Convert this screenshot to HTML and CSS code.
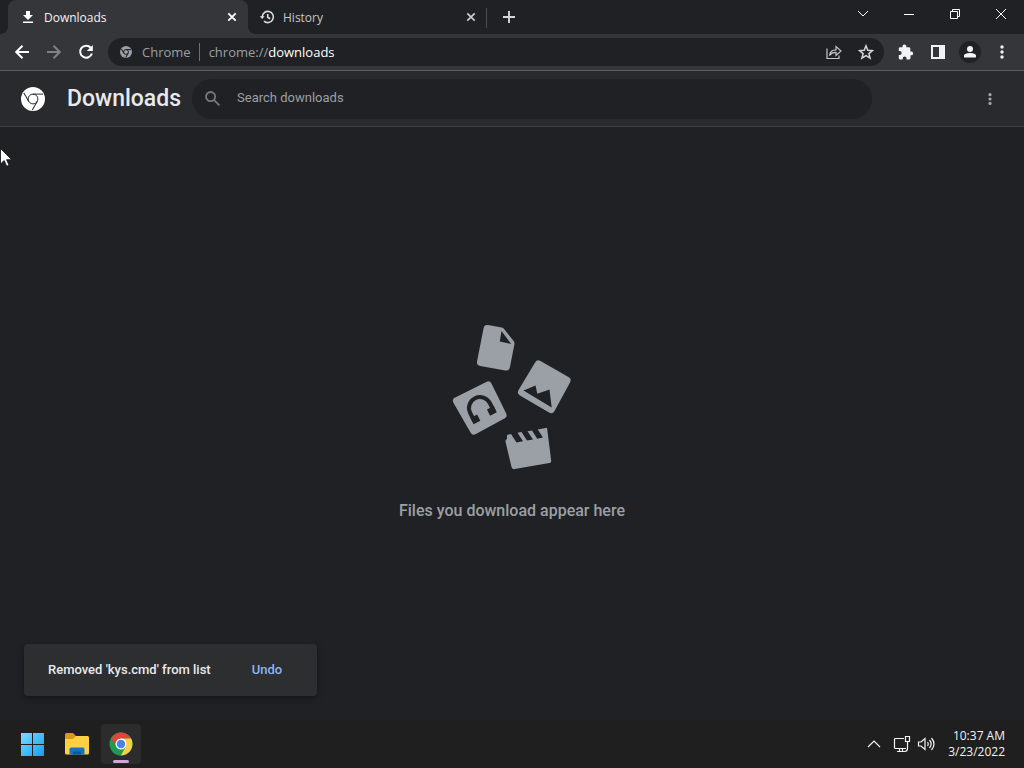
FILE: index.html
```html
<!DOCTYPE html>
<html lang="en">
<head>
<meta charset="utf-8">
<title>Downloads</title>
<link rel="stylesheet" href="styles.css">
</head>
<body>
<svg class="defs" aria-hidden="true">
  <symbol id="chrome-mono" viewBox="0 0 24 24">
    <circle cx="12" cy="12" r="12" fill="currentColor"/>
    <g class="spokes">
      <circle cx="12" cy="12" r="4.900"/>
      <path d="M12 7.100H22"/>
      <path d="M12 7.100H22" transform="rotate(120 12 12)"/>
      <path d="M12 7.100H22" transform="rotate(240 12 12)"/>
    </g>
  </symbol>
</svg>

<header class="tabstrip">
  <div class="tab tab-active">
    <svg class="tab-icon" viewBox="0 0 16 16"><path d="M6 2h4v4h3l-5 5-5-5h3zM3 12.500h10V14H3z" fill="#fff"/></svg>
    <span class="tab-title">Downloads</span>
    <button class="tab-close" aria-label="Close Downloads"><svg viewBox="0 0 16 16"><path d="M4.300 4.300l7.400 7.400M11.700 4.300l-7.400 7.400" stroke="#fff" stroke-width="1.800"/></svg></button>
  </div>
  <div class="tab tab-idle">
    <svg class="tab-icon" viewBox="0 0 16 16" fill="none" stroke="#dadce0" stroke-width="1.600"><path d="M3.200 8A5.600 5.600 0 1 1 5 12.100M8.700 5v3.300l2.500 1.500"/><path d="M.8 7.300h4.800L3.200 10z" fill="#dadce0" stroke="none"/></svg>
    <span class="tab-title">History</span>
    <button class="tab-close" aria-label="Close History"><svg viewBox="0 0 16 16"><path d="M4.300 4.300l7.400 7.400M11.700 4.300l-7.400 7.400" stroke="#c8cace" stroke-width="1.700"/></svg></button>
  </div>
  <button class="new-tab" aria-label="New tab"><svg viewBox="0 0 16 16"><path d="M8 2v12M2 8h12" stroke="#d5d7da" stroke-width="1.900"/></svg></button>
  <div class="window-controls">
    <button aria-label="Search tabs"><svg viewBox="0 0 16 16"><path d="M3 5l5 5 5-5"/></svg></button>
    <button aria-label="Minimize"><svg viewBox="0 0 16 16"><path d="M3 8.500h10"/></svg></button>
    <button aria-label="Restore"><svg viewBox="0 0 16 16"><path d="M3.500 5.500h7v7h-7zM5.500 5.500v-2h7v7h-2"/></svg></button>
    <button aria-label="Close"><svg viewBox="0 0 16 16"><path d="M3 3l10 10M13 3L3 13"/></svg></button>
  </div>
</header>

<nav class="toolbar" aria-label="Browser toolbar">
  <button class="tool" aria-label="Back"><svg viewBox="0 0 16 16" fill="none" stroke="#fff" stroke-width="2"><path d="M15 8H2.500M8.500 1.700L2.200 8l6.300 6.300"/></svg></button>
  <button class="tool" aria-label="Forward"><svg viewBox="0 0 16 16" fill="none" stroke="#7e8084" stroke-width="2"><path d="M1 8h12.500M7.500 1.700L13.800 8l-6.300 6.300"/></svg></button>
  <button class="tool" aria-label="Reload"><svg viewBox="0 0 16 16" fill="none" stroke="#fff" stroke-width="2"><path d="M12.700 3.700A6 6 0 1 0 13.900 9.500"/><path d="M14.800 1v6h-6z" fill="#fff" stroke="none"/></svg></button>
  <div class="omnibox">
    <svg class="site-icon"><use href="#chrome-mono"/></svg>
    <span class="site-name">Chrome</span>
    <span class="url">chrome://<b>downloads</b></span>
    <button class="tool" aria-label="Share"><svg viewBox="0 0 16 16" fill="none" stroke="#c4c6c9" stroke-width="1.200"><path d="M1 4.500v10h12v-3M3.500 11.500C4 8 6.500 5.800 10 5.800V2.500l5 4.500-5 4.500V8.300C7 8.300 5 9.300 3.500 11.500z"/></svg></button>
    <button class="tool" aria-label="Bookmark this tab"><svg viewBox="0 0 16 16" fill="none" stroke="#d5d7da" stroke-width="1.500"><path d="M8 1.800l1.800 4.400 4.700.4-3.600 3 1.200 4.600L8 11.700l-4.100 2.500 1.200-4.600-3.600-3 4.700-.4z"/></svg></button>
  </div>
  <button class="tool" aria-label="Extensions"><svg viewBox="0 0 16 16"><path fill="#f1f3f4" d="M13.300 7.500h-1V4.600c0-.8-.6-1.400-1.400-1.400H8.300v-.9a1.900 1.900 0 0 0-3.800 0v.9H2C1.200 3.200.8 3.800.8 4.600v2.500h.9a2 2 0 0 1 0 4H.8V14c0 .8.500 1.400 1.300 1.400h2.600v-1a1.900 1.900 0 0 1 3.900 0v1h2.600c.7 0 1.300-.6 1.300-1.400v-2.700h.8a1.900 1.900 0 0 0 0-3.800z"/></svg></button>
  <button class="tool" aria-label="Side panel"><svg viewBox="0 0 16 16"><path fill="#f1f3f4" fill-rule="evenodd" d="M1 1h14v14H1zM3 3v10h6V3z"/></svg></button>
  <button class="tool profile" aria-label="Profile"><svg viewBox="0 0 16 16" fill="#f1f3f4"><circle cx="8" cy="5" r="3"/><path d="M2 13.500v-1.700C2 9.800 5.500 9 8 9s6 .8 6 2.800v1.700z"/></svg></button>
  <button class="tool" aria-label="Menu"><svg viewBox="0 0 16 16" fill="#f1f3f4"><circle cx="8" cy="3" r="1.700"/><circle cx="8" cy="8" r="1.700"/><circle cx="8" cy="13" r="1.700"/></svg></button>
</nav>

<section class="page-header">
  <svg class="page-logo"><use href="#chrome-mono"/></svg>
  <h1>Downloads</h1>
  <label class="search">
    <svg viewBox="0 0 16 16" fill="none" stroke="#77797b" stroke-width="1.700"><circle cx="6.200" cy="6.200" r="4.300"/><path d="M9.300 9.300l5.200 5.200"/></svg>
    <input type="search" placeholder="Search downloads" aria-label="Search downloads">
  </label>
  <button class="tool more" aria-label="More actions"><svg viewBox="0 0 16 16" fill="#a4a7ab"><circle cx="8" cy="3" r="1.800"/><circle cx="8" cy="8" r="1.800"/><circle cx="8" cy="13" r="1.800"/></svg></button>
</section>

<main class="content">
  <svg class="empty-art" viewBox="450 320 124 152" aria-hidden="true">
    <g fill="#9aa0a6" stroke="#9aa0a6" stroke-width="8" stroke-linejoin="round">
      <path d="M487.500 329l13.500 2.500 9.500 12-4.500 23-25-4.500z"/>
      <path d="M538.500 364.500l28 16-15.500 28.500-29-17z"/>
      <path d="M488 385.500l14.500 29.500-28.500 15.500-17-29.500z"/>
    </g>
    <path fill="#9aa0a6" d="M507 435l4-1 5.500 8.500 6.500-1.300-5.500-8.500 4-.6 5.500 8.500 6-1.200-5.500-8.200 4.500-.8 5.200 8.300 5.800-1.200-5.300-8 9.300-1.800 4.200 33q.3 2-1.700 2.400l-35 6q-2.500.3-3-2l-5.900-25q-.6-2.500 1.400-3.100z"/>
    <g fill="#202124">
      <path d="M501.500 331l-1.700 10.500 11.400 2.500z"/>
      <path d="M523.500 390.500l12-5 1.800 8.200 12.200-4.200 2.200 18z"/>
    </g>
    <g transform="rotate(-27 480 408)" fill="none" stroke="#202124">
      <path d="M469 417v-9a11 11 0 0 1 22 0v9" stroke-width="4"/>
      <path d="M467 416h7.500M485.500 416h7.500" stroke-width="7"/>
    </g>
  </svg>
  <p class="empty-text">Files you download appear here</p>
  <div class="toast" role="status">
    <span>Removed 'kys.cmd' from list</span>
    <button>Undo</button>
  </div>
</main>

<footer class="taskbar">
  <button class="app" aria-label="Start"><svg viewBox="0 0 24 24"><defs><linearGradient id="win" x1="0" y1="0" x2="24" y2="24" gradientUnits="userSpaceOnUse"><stop stop-color="#7fdcff"/><stop offset="1" stop-color="#0f9cf0"/></linearGradient></defs><path fill="url(#win)" d="M0 1h11v11H0zM12 1h11v11H12zM0 13h11v11H0zM12 13h11v11H12z"/></svg></button>
  <button class="app" aria-label="File Explorer"><svg viewBox="0 0 24 24"><path d="M0 2.500Q0 1 1.500 1H8l3 3v5H0z" fill="#d99a1b"/><path d="M0 7h8l3-3h11.500Q24 4 24 5.500V21q0 1.500-1.500 1.500h-21Q0 22.500 0 21z" fill="#ffd043"/><path d="M4.500 22.500V17q0-1.500 1.500-1.500h12q1.500 0 1.500 1.500v5.500z" fill="#1673c4"/><path d="M8 22.500v-3h8v3z" fill="#0b579f"/></svg></button>
  <button class="app app-open" aria-label="Google Chrome"><svg viewBox="0 0 24 24"><circle cx="12" cy="12" r="11.500" fill="#1e9b50"/><path d="M12 6.500h10.100A11.500 11.500 0 0 0 2.200 6l5.100 8.700z" fill="#d9483b"/><path d="M12 6.500h10.100a11.500 11.500 0 0 1-10.300 17l5-8.700z" fill="#f8cf45"/><circle cx="12" cy="12" r="5.500" fill="#fff"/><circle cx="12" cy="12" r="4.200" fill="#4a83e8"/></svg></button>
  <div class="tray">
    <button aria-label="Show hidden icons"><svg viewBox="0 0 20 20"><path d="M4 13l6-6 6 6"/></svg></button>
    <button aria-label="Network"><svg viewBox="0 0 20 20"><path d="M12 4.500H3.500q-1 0-1 1v8q0 1 1 1H14M7.500 14.500v3M10.500 14.500v3M5 17.500h8M13.500 2.500h4v5h-4zM15.500 7.500v7q0 3-3 3"/></svg></button>
    <button aria-label="Volume"><svg viewBox="0 0 20 20"><path d="M2.500 8h2.500l4-3.500v11L5 12H2.500zM11.500 8q1.500 2 0 4M13.500 6q3.300 4 0 8M15.500 4q5 6 0 12"/></svg></button>
    <div class="clock"><time>10:37 AM</time><time>3/23/2022</time></div>
  </div>
</footer>

<svg class="pointer" viewBox="0 0 12 19" aria-hidden="true"><path d="M.5.5v15.500l3.700-3.500 2.400 5.700 2.400-1-2.400-5.500h5z" fill="#fff" stroke="#111" stroke-width=".8"/></svg>
</body>
</html>
```
FILE: styles.css
```css
* { box-sizing: border-box; }

body {
  margin: 0;
  height: 100vh;
  display: flex;
  flex-direction: column;
  overflow: hidden;
  background: #202124;
  color: #e8eaed;
  font-family: "Open Sans", "Noto Sans", sans-serif;
  font-size: 12px;
}

button {
  display: flex;
  align-items: center;
  justify-content: center;
  padding: 0;
  border: 0;
  background: none;
  color: inherit;
  font: inherit;
}

svg { display: block; flex: none; }
.defs { position: absolute; width: 0; height: 0; }
.spokes { fill: none; stroke: var(--cut); stroke-width: var(--cut-width); }

/* Tabs */
.tabstrip {
  display: flex;
  height: 34px;
  padding-left: 8px;
  background: #202124;
}
.tab {
  position: relative;
  display: flex;
  align-items: center;
  width: 240px;
  padding: 0 8px 0 12px;
}
.tab-active {
  border-radius: 8px 8px 0 0;
  background: #35363a;
  color: #f1f3f4;
}
.tab-active::before,
.tab-active::after {
  content: "";
  position: absolute;
  bottom: 0;
  width: 8px;
  height: 8px;
}
.tab-active::before { left: -8px; background: radial-gradient(circle at 0 0, #202124 8px, #35363a 8px); }
.tab-active::after { right: -8px; background: radial-gradient(circle at 100% 0, #202124 8px, #35363a 8px); }
.tab-idle { width: 239px; padding-left: 11px; color: #c4c7cb; }
.tab-idle::after {
  content: "";
  position: absolute;
  right: 0;
  top: 8px;
  width: 1px;
  height: 20px;
  background: #4a4c50;
}
.tab-icon { width: 16px; height: 16px; }
.tab-title { flex: 1; margin-left: 8px; }
.tab-close svg { width: 16px; height: 16px; }
.new-tab { width: 28px; margin-left: 8px; }
.new-tab svg { width: 16px; height: 16px; }
.window-controls { display: flex; margin-left: auto; }
.window-controls button { width: 46px; height: 28px; }
.window-controls svg { width: 16px; height: 16px; fill: none; stroke: #fff; }

/* Toolbar */
.toolbar {
  display: flex;
  align-items: center;
  height: 37px;
  padding: 0 6px;
  background: #35363a;
  border-bottom: 1px solid #5c5e62;
}
.tool { width: 32px; height: 28px; flex: none; }
.tool svg { width: 16px; height: 16px; }
.omnibox {
  flex: 1;
  display: flex;
  align-items: center;
  height: 28px;
  margin: 0 6px;
  padding: 0 2px 0 12px;
  border-radius: 14px;
  background: #202124;
  color: #9aa0a6;
  font-size: 13px;
}
.site-icon { width: 12px; height: 12px; color: #9aa0a6; --cut: #202124; --cut-width: 2px; }
.site-name {
  margin: 0 9px 0 10px;
  padding-right: 8px;
  border-right: 1px solid #6c6f73;
  line-height: 18px;
}
.url { flex: 1; }
.url b { color: #fff; font-weight: 400; }
.profile svg {
  width: 22px;
  height: 22px;
  padding: 3px;
  border-radius: 11px;
  background: #202124;
}

/* Downloads page */
.page-header {
  display: flex;
  align-items: center;
  height: 56px;
  padding: 0 18px 0 21px;
  background: #292a2d;
  border-bottom: 1px solid #414245;
  font-family: Roboto, sans-serif;
}
.page-logo { width: 24px; height: 24px; color: #fff; --cut: #292a2d; --cut-width: 1px; }
h1 {
  margin: 0 11px 0 22px;
  font-size: 23px;
  font-weight: 500;
}
.search {
  flex: 0 1 680px;
  display: flex;
  align-items: center;
  height: 40px;
  padding: 0 12px;
  border-radius: 20px;
  background: #202124;
}
.search svg { width: 17px; height: 17px; }
.search input {
  flex: 1;
  min-width: 0;
  margin-left: 16px;
  padding: 0 0 2px;
  border: 0;
  outline: 0;
  background: none;
  color: #e8eaed;
  font: 13px Roboto, sans-serif;
}
.search input::placeholder { color: #9aa0a6; }
.more { margin-left: auto; }
.more svg { width: 14px; height: 14px; }

.content {
  position: relative;
  flex: 1;
  display: flex;
  flex-direction: column;
  align-items: center;
  justify-content: center;
  padding-bottom: 6px;
  font-family: Roboto, sans-serif;
}
.empty-art { width: 124px; height: 152px; }
.empty-text {
  margin: 28px 0 0;
  color: #9aa0a6;
  font-size: 16px;
  font-weight: 500;
  line-height: 22px;
}
.toast {
  position: absolute;
  left: 24px;
  bottom: 24px;
  display: flex;
  align-items: center;
  height: 52px;
  padding: 0 35px 2px 24px;
  gap: 41px;
  border-radius: 4px;
  background: #2d2e30;
  box-shadow: 0 2px 6px #0006;
  font-size: 13px;
  font-weight: 500;
}
.toast button { color: #8ab4f8; }

/* Taskbar */
.taskbar {
  display: flex;
  align-items: center;
  gap: 4px;
  height: 48px;
  padding: 0 19px 0 13px;
  background: #1f1f1f;
}
.app { position: relative; width: 40px; height: 40px; border-radius: 4px; }
.app svg { width: 24px; height: 24px; }
.app-open { background: #2c2c2d; }
.app-open::after {
  content: "";
  position: absolute;
  left: 12px;
  bottom: 1px;
  width: 16px;
  height: 3px;
  border-radius: 2px;
  background: #d6a3dc;
}
.tray { display: flex; align-items: center; gap: 4px; margin-left: auto; }
.tray svg { width: 20px; height: 20px; fill: none; stroke: #f3f3f3; stroke-width: 1.2; }
.tray button:first-child { margin-right: 4px; }
.clock {
  display: flex;
  flex-direction: column;
  align-items: flex-end;
  margin-left: 8px;
  color: #f3f3f3;
  font-size: 12px;
  line-height: 16px;
}

.pointer { position: absolute; left: 0; top: 148px; width: 12px; height: 19px; }
```
